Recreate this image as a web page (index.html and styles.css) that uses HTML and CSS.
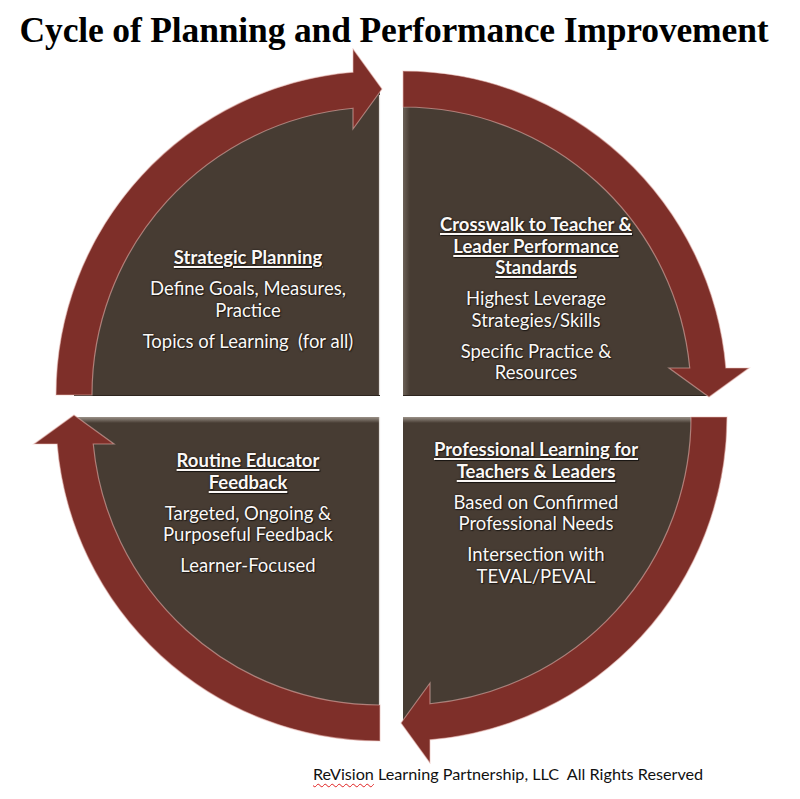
FILE: index.html
```html
<!DOCTYPE html>
<html>
<head>
<meta charset="utf-8">
<title>Cycle of Planning and Performance Improvement</title>
<link rel="stylesheet" href="styles.css">
</head>
<body>
<h1 class="title">Cycle of Planning and Performance Improvement</h1>
<div class="diagram">
  <svg class="ring" viewBox="0 48 800 716" width="800" height="716" xmlns="http://www.w3.org/2000/svg">
    <defs>
      <linearGradient id="topLight" x1="0" y1="0" x2="0" y2="1">
        <stop offset="0" stop-color="#a39a91" stop-opacity="0.9"/>
        <stop offset="1" stop-color="#a39a91" stop-opacity="0"/>
      </linearGradient>
      <linearGradient id="sideLight" x1="0" y1="0" x2="1" y2="0">
        <stop offset="0" stop-color="#8a7f75" stop-opacity="0.55"/>
        <stop offset="1" stop-color="#8a7f75" stop-opacity="0"/>
      </linearGradient>
      <path id="slice" d="M0 0 L-306 0 A306 306 0 0 1 0 -306 Z"/>
      <path id="band" d="M-324 0 A324 324 0 0 1 -27 -322.87 L-27 -346 L2 -306 L-27 -266 L-27 -286.73 A288 288 0 0 0 -288 0 Z"/>
    </defs>
    <g class="slices">
      <use href="#slice" transform="translate(380 395)"/>
      <use href="#slice" transform="translate(403 395) rotate(90)"/>
      <use href="#slice" transform="translate(403 417) rotate(180)"/>
      <use href="#slice" transform="translate(380 417) rotate(270)"/>
    </g>
    <rect x="403" y="100" width="7" height="295" fill="url(#sideLight)"/>
    <rect x="74" y="417" width="306" height="6" fill="url(#topLight)"/>
    <rect x="403" y="417" width="306" height="6" fill="url(#topLight)"/>
    <line x1="379.5" y1="95" x2="379.5" y2="395" stroke="#e6e2de" stroke-width="1.2"/>
    <line x1="379.5" y1="417" x2="379.5" y2="720" stroke="#e6e2de" stroke-width="1.2"/>
    <line x1="74" y1="395.5" x2="380" y2="395.5" stroke="#2e251f" stroke-width="1"/>
    <line x1="403" y1="395.5" x2="709" y2="395.5" stroke="#2e251f" stroke-width="1"/>
    <g class="bands">
      <use href="#band" transform="translate(380 395)"/>
      <use href="#band" transform="translate(403 395) rotate(90)"/>
      <use href="#band" transform="translate(403 417) rotate(180)"/>
      <use href="#band" transform="translate(380 417) rotate(270)"/>
    </g>
  </svg>
  <div class="labels">
    <div class="cell left top-left">
      <p class="head">Strategic Planning</p>
      <p>Define Goals, Measures,<br>Practice</p>
      <p>Topics of Learning&nbsp; (for all)</p>
    </div>
    <div class="cell right top-right">
      <p class="head">Crosswalk to Teacher &amp;<br>Leader Performance<br>Standards</p>
      <p>Highest Leverage<br>Strategies/Skills</p>
      <p>Specific Practice &amp;<br>Resources</p>
    </div>
    <div class="cell left bottom-left">
      <p class="head">Routine Educator<br>Feedback</p>
      <p>Targeted, Ongoing &amp;<br>Purposeful Feedback</p>
      <p>Learner-Focused</p>
    </div>
    <div class="cell right bottom-right">
      <p class="head">Professional Learning for<br>Teachers &amp; Leaders</p>
      <p>Based on Confirmed<br>Professional Needs</p>
      <p>Intersection with<br>TEVAL/PEVAL</p>
    </div>
  </div>
</div>
<p class="footer"><span class="spell">ReVision</span> Learning Partnership, LLC&nbsp; All Rights Reserved</p>
</body>
</html>
```

FILE: styles.css
```css
html, body {
  margin: 0;
  padding: 0;
  background: #ffffff;
}

body {
  width: 800px;
  height: 799px;
  overflow: hidden;
  font-family: Lato, "Open Sans", sans-serif;
}

.title {
  margin: 0;
  padding-top: 13px;
  padding-right: 12px;
  height: 35px;
  line-height: 35px;
  font-family: "Liberation Serif", "Times New Roman", serif;
  font-weight: bold;
  font-size: 35.5px;
  letter-spacing: -0.15px;
  color: #000000;
  text-align: center;
  white-space: nowrap;
}

.diagram {
  position: relative;
  width: 800px;
  height: 716px;
}

.ring {
  display: block;
}

.slices use {
  fill: #473c33;
}

.bands use {
  fill: #7e2f29;
  stroke: rgba(235, 190, 184, 0.55);
  stroke-width: 1.2;
  stroke-linejoin: miter;
}

.labels {
  position: absolute;
  inset: 0;
  display: grid;
  grid-template-columns: 391px 409px;
  grid-template-rows: 358px 358px;
}

.cell {
  box-sizing: border-box;
  text-align: center;
  white-space: nowrap;
  color: #fbf8f6;
  font-size: 18.5px;
  line-height: 21.5px;
  text-shadow: 0 0 2px rgba(0, 0, 0, 0.75), 1px 1px 1px rgba(0, 0, 0, 0.5);
}

.cell p {
  margin: 0;
}

.cell p + p {
  margin-top: 9.5px;
}

.cell .head {
  font-weight: bold;
  text-decoration: underline;
  text-decoration-thickness: 1.5px;
  text-underline-offset: 2px;
}

.left {
  padding-left: 105px;
}

.right {
  padding-right: 119px;
}

.top-left {
  padding-top: 199px;
}

.top-right {
  padding-top: 166px;
}

.bottom-left {
  padding-top: 44px;
}

.bottom-right {
  padding-top: 33px;
}

.footer {
  margin: 0;
  padding-left: 313px;
  font-size: 16.2px;
  line-height: 20px;
  color: #111111;
  white-space: nowrap;
}

.spell {
  text-decoration: underline wavy #e02020;
  text-decoration-thickness: 1px;
  text-underline-offset: 3px;
}
```
